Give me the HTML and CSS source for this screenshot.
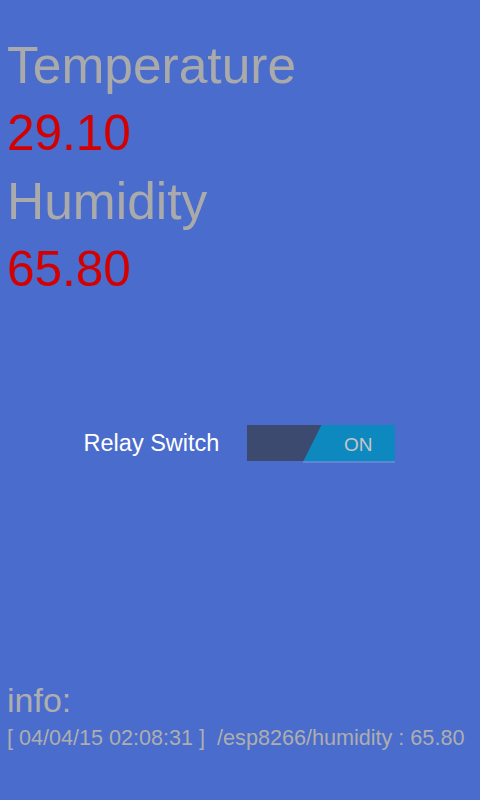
FILE: index.html
```html
<!DOCTYPE html>
<html>
<head>
<meta charset="utf-8">
<link rel="stylesheet" href="styles.css">
</head>
<body>
<div class="page">
  <div class="readings">
    <div class="label">Temperature</div>
    <div class="value">29.10</div>
    <div class="label">Humidity</div>
    <div class="value">65.80</div>
  </div>
  <div class="relay">
    <span class="relay-label">Relay Switch</span>
    <div class="switch"><span class="switch-text">ON</span></div>
  </div>
  <div class="info">
    <div class="info-title">info:</div>
    <div class="info-line">[ 04/04/15 02:08:31 ]&nbsp; /esp8266/humidity : 65.80</div>
  </div>
</div>
</body>
</html>
```
FILE: styles.css
```css
html, body {
  margin: 0;
  padding: 0;
  background: #4a6ccc;
  font-family: "Liberation Sans", Arial, Helvetica, sans-serif;
}
.page {
  width: 480px;
  height: 800px;
  padding: 31px 0 0 7px;
  box-sizing: border-box;
}
.readings {
  font-size: 51.5px;
  line-height: 68px;
}
.label {
  color: #aaaaaa;
}
.value {
  color: #d40000;
  font-size: 49.5px;
}
.relay {
  margin-top: 122px;
  display: flex;
  align-items: center;
  justify-content: center;
  gap: 28px;
  margin-left: -8px;
}
.relay-label {
  color: #ffffff;
  font-size: 23.5px;
}
.switch {
  position: relative;
  width: 148px;
  height: 36px;
  background: #3c4a6f;
  display: flex;
  align-items: center;
  justify-content: flex-end;
  padding-right: 23px;
  box-sizing: border-box;
}
.switch::before {
  content: "";
  position: absolute;
  inset: 0;
  background: #0e89bf;
  clip-path: polygon(74px 0, 100% 0, 100% 100%, 56px 100%);
}
.switch::after {
  content: "";
  position: absolute;
  left: 56px;
  right: 0;
  bottom: -2px;
  height: 2px;
  background: #5f85d6;
}
.switch-text {
  position: relative;
  color: #c6c6c6;
  font-size: 19px;
  line-height: 1;
  padding-top: 2px;
}
.info {
  margin-top: 219px;
  color: #aeaeae;
}
.info-title {
  font-size: 34px;
  line-height: 40px;
}
.info-line {
  font-size: 21.6px;
  line-height: 26px;
  margin-top: 5px;
  white-space: nowrap;
}
```
